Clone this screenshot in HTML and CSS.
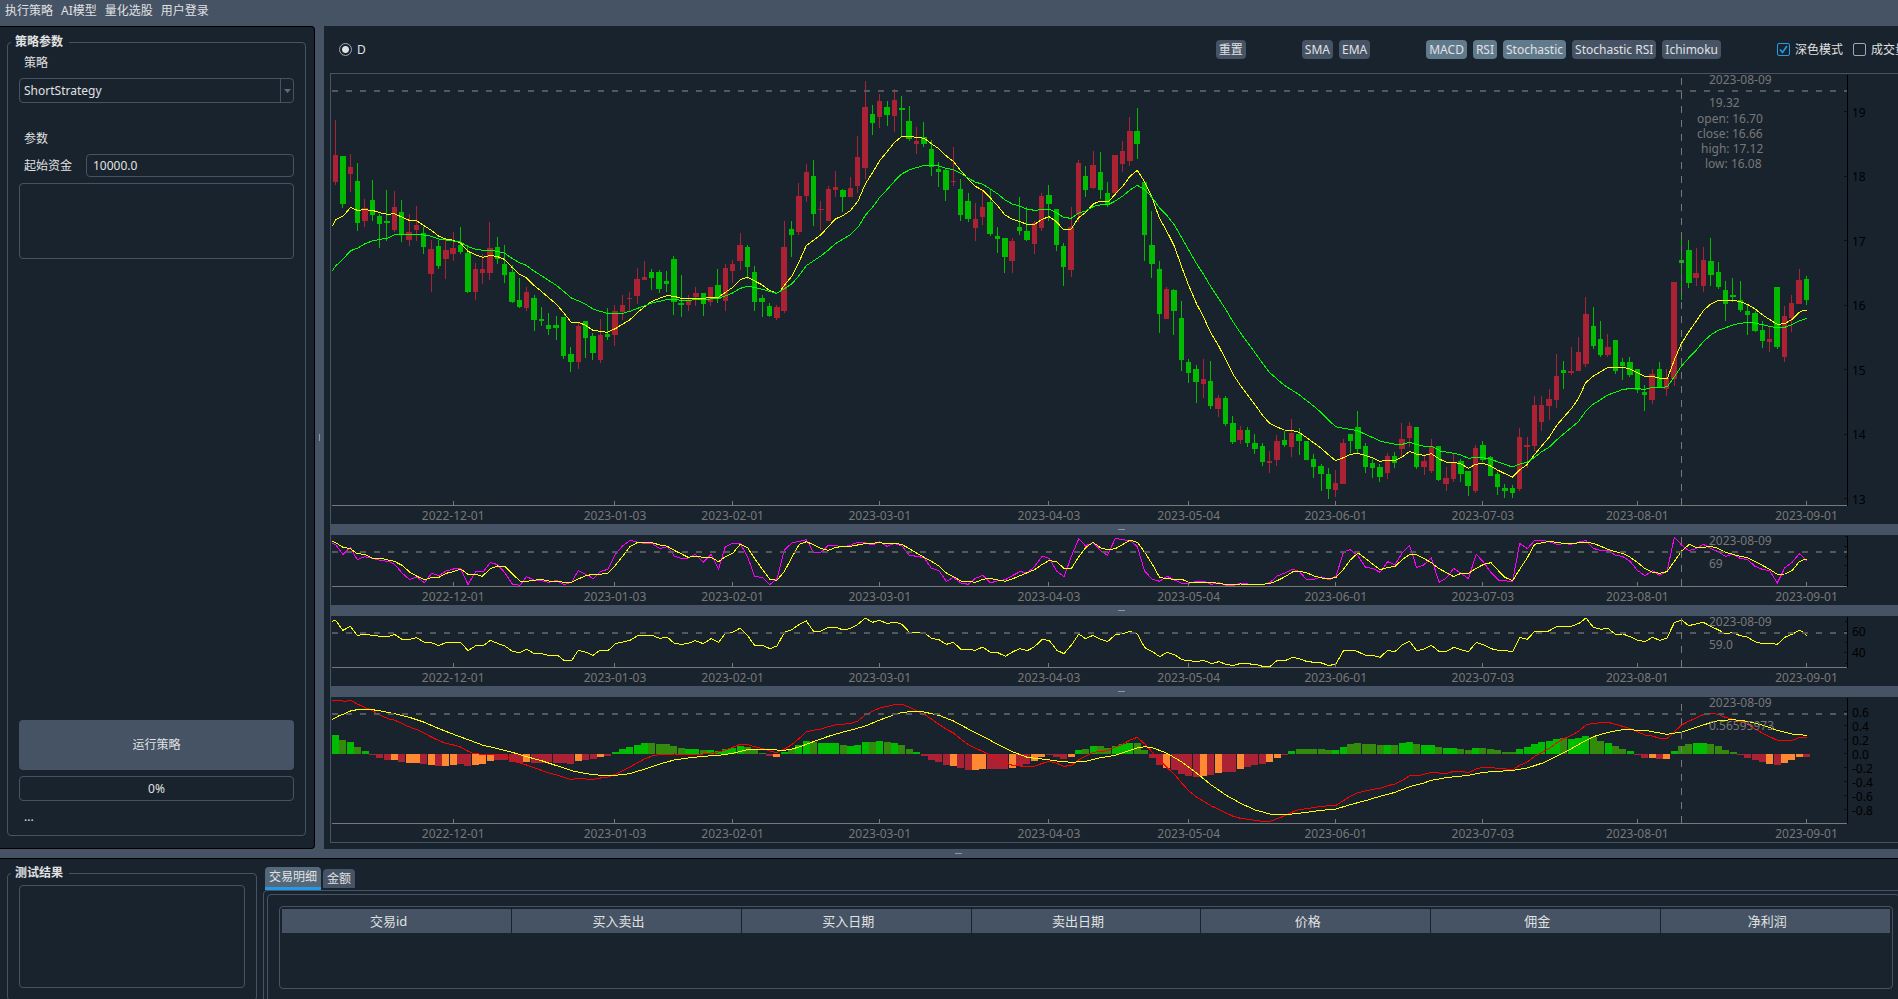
FILE: index.html
```html
<!DOCTYPE html>
<html lang="zh-CN">
<head>
<meta charset="utf-8">
<title>策略回测</title>
<link rel="stylesheet" href="styles.css">
</head>
<body>
<div class="app">
  <nav class="menubar">
    <button type="button" class="menu-item">执行策略</button>
    <button type="button" class="menu-item">AI模型</button>
    <button type="button" class="menu-item">量化选股</button>
    <button type="button" class="menu-item">用户登录</button>
  </nav>
  <main class="workspace">
    <aside class="side">
      <fieldset class="group params">
        <legend>策略参数</legend>
        <label class="caption" for="strategy">策略</label>
        <div class="select-wrap">
          <select id="strategy" class="field select"><option>ShortStrategy</option></select>
          <span class="select-arrow"><svg width="7" height="4" viewBox="0 0 7 4"><path d="M0 0h7L3.500 4z" fill="#5a6c80"/></svg></span>
        </div>
        <p class="caption section">参数</p>
        <div class="row">
          <label for="capital">起始资金</label>
          <input id="capital" class="field" type="text" value="10000.0">
        </div>
        <div class="box param-box"></div>
        <div class="spring"></div>
        <button type="button" class="run">运行策略</button>
        <div class="box progress" role="progressbar" aria-valuenow="0">0%</div>
        <p class="status">...</p>
      </fieldset>
    </aside>
    <div class="vsplit"><span class="vgrip"></span></div>
    <section class="main">
      <div class="toolbar">
        <label class="radio"><input type="radio" name="period" checked>D</label>
        <div class="spring"></div>
        <div class="tools"><button type="button" class="tool">重置</button></div>
        <div class="tools">
          <button type="button" class="tool">SMA</button>
          <button type="button" class="tool">EMA</button>
        </div>
        <div class="tools">
          <button type="button" class="tool on">MACD</button>
          <button type="button" class="tool on">RSI</button>
          <button type="button" class="tool on">Stochastic</button>
          <button type="button" class="tool">Stochastic RSI</button>
          <button type="button" class="tool">Ichimoku</button>
        </div>
        <div class="tools checks">
          <label class="check"><input type="checkbox" checked>深色模式</label>
          <label class="check"><input type="checkbox">成交量</label>
        </div>
      </div>
      <div class="charts">
        <div class="plot price"><svg id="price"></svg></div>
        <div class="hsplit"><span class="grip"></span></div>
        <div class="plot small"><svg id="stoch"></svg></div>
        <div class="hsplit"><span class="grip"></span></div>
        <div class="plot small"><svg id="rsi"></svg></div>
        <div class="hsplit"><span class="grip"></span></div>
        <div class="plot macd"><svg id="macd"></svg></div>
      </div>
    </section>
  </main>
  <div class="divider"><span class="grip"></span></div>
  <section class="bottom">
    <fieldset class="group results">
      <legend>测试结果</legend>
      <div class="box result-box"></div>
    </fieldset>
    <div class="trades">
      <div class="tabs">
        <button type="button" class="tab active">交易明细</button>
        <button type="button" class="tab">金额</button>
      </div>
      <div class="pane">
        <div class="pane-inner">
          <div class="box table-box">
            <table class="table">
              <thead><tr><th>交易id</th><th>买入卖出</th><th>买入日期</th><th>卖出日期</th><th>价格</th><th>佣金</th><th>净利润</th></tr></thead>
            </table>
          </div>
        </div>
      </div>
    </div>
  </section>
</div>
<script src="charts.js"></script>
</body>
</html>
```
FILE: styles.css
```css
* { box-sizing: border-box; }
body {
  margin: 0;
  background: #19232d;
  color: #e0e1e3;
  font: 12px/16px "Noto Sans", "Noto Sans CJK SC", sans-serif;
}
button, input, select { font: inherit; color: inherit; margin: 0; }
button { border: 0; cursor: pointer; }
p { margin: 0; }
.app { height: 100vh; overflow: hidden; display: flex; flex-direction: column; background: #455364; }
.menubar { flex: 0 0 26px; display: flex; gap: 8px; padding: 2px 5px 6px; }
.menu-item { background: none; padding: 0; line-height: 18px; }
.workspace { flex: 1; min-height: 0; display: flex; }
.side {
  flex: 0 0 315px;
  display: flex;
  padding: 7px 8px 12px 7px;
  background: #19232d;
  border: 1px solid #000;
  border-left: 0;
  border-radius: 0 4px 4px 0;
}
.group { margin: 0; min-width: 0; border: 1px solid #455364; border-radius: 4px; }
.group legend { font-weight: bold; line-height: 16px; padding: 0 6px 0 4px; margin-left: -8px; }
.params { flex: 1; display: flex; flex-direction: column; padding: 5px 11px 10px; }
.caption { padding-left: 5px; margin-bottom: 7px; }
.select-wrap { position: relative; display: flex; }
.field { border: 1px solid #455364; border-radius: 4px; background: #19232d; outline: 0; }
.select { appearance: none; width: 100%; height: 25px; padding: 0 4px; }
.select-arrow {
  position: absolute; top: 0; right: 0; bottom: 0; width: 14px;
  display: flex; align-items: center; justify-content: center;
  border-left: 1px solid #455364; pointer-events: none;
}
.section { margin-top: 28px; margin-bottom: 7px; }
.row { display: flex; align-items: center; justify-content: space-between; padding-left: 5px; }
.row .field { width: 208px; height: 23px; padding: 0 6px; }
.box { border: 1px solid #455364; border-radius: 4px; }
.param-box { height: 76px; margin-top: 6px; }
.spring { flex: 1; }
.run { height: 50px; background: #455364; border-radius: 4px; }
.progress { height: 25px; margin-top: 6px; text-align: center; line-height: 23px; }
.status { padding: 8px 5px 0; }
.vsplit { flex: 0 0 9px; display: flex; align-items: center; justify-content: center; }
.vgrip { width: 1px; height: 7px; background: #8b98a6; }
.grip { width: 7px; height: 1px; background: #8b98a6; }
.main { flex: 1; min-width: 0; overflow: hidden; display: flex; flex-direction: column; background: #19232d; padding: 0 0 6px 6px; }
.toolbar { flex: 0 0 47px; display: flex; align-items: center; padding-left: 9px; margin-right: -9px; white-space: nowrap; }
.tools { display: flex; gap: 6px; margin-right: 56px; }
.checks { margin-right: 0; gap: 10px; }
.tool { height: 19px; padding: 0 3px; line-height: 19px; background: #455364; border-radius: 4px; }
.tool.on { background: #60798b; }
.radio, .check { display: flex; align-items: center; gap: 5px; }
.radio input, .check input { appearance: none; flex: none; width: 13px; height: 13px; border: 1px solid #9da9b5; background: #19232d; }
.radio input { border-radius: 50%; }
.radio input:checked { background: radial-gradient(circle, #e0e1e3 3px, #19232d 4px); }
.check input { border-radius: 2px; }
.check input:checked {
  border-color: #259ae9;
  background: url("data:image/svg+xml,%3Csvg xmlns='http://www.w3.org/2000/svg' viewBox='0 0 11 11'%3E%3Cpath d='M2 5.5l2.500 3L9 2' fill='none' stroke='%23259ae9' stroke-width='1.6'/%3E%3C/svg%3E") center / 11px 11px no-repeat #19232d;
}
.charts { flex: 1; min-height: 0; display: flex; flex-direction: column; border: 1px solid #455364; border-right: 0; }
.plot { flex: 0 0 auto; min-height: 0; }
.plot svg { display: block; width: 100%; height: 100%; overflow: visible; }
.plot.price { flex: 1 1 0; }
.plot.small { height: 70px; }
.plot.macd { height: 145px; }
.plot text { font-size: 12px; fill: #787878; }
.plot text.scale { fill: #000; }
.hsplit { flex: 0 0 11px; display: flex; align-items: center; justify-content: center; padding-left: 14px; background: #455364; }
.divider { flex: 0 0 9px; display: flex; align-items: center; justify-content: center; padding-left: 18px; }
.bottom { flex: 0 0 141px; min-height: 0; overflow: hidden; display: flex; align-items: flex-start; background: #19232d; border-top: 1px solid #000; }
.results { flex: 0 0 250px; height: 136px; margin: 6px 5px 0 7px; padding: 4px 11px 11px; }
.result-box { height: 103px; }
.trades { flex: 1; min-width: 0; padding: 8px 0 0 1px; margin-right: -6px; }
.tabs { display: flex; align-items: flex-end; gap: 2px; height: 23px; padding-left: 2px; }
.tab { height: 19px; padding: 0 4px; line-height: 19px; margin-bottom: 2px; background: #455364; border-radius: 4px 4px 0 0; }
.tab.active { height: 23px; margin-bottom: 0; line-height: 20px; background: #54687a; border-bottom: 3px solid #259ae9; }
.pane { border: 1px solid #455364; border-radius: 4px 4px 0 0; padding: 3px; height: 120px; }
.pane-inner { border: 1px solid #455364; border-radius: 4px 4px 0 0; height: 120px; padding: 11px 6px 11px 11px; }
.table-box { height: 83px; padding: 2px; }
.table { width: 100%; border-collapse: collapse; table-layout: fixed; }
.table th { height: 24px; padding: 0 16px 0 0; font-size: 13px; font-weight: normal; background: #455364; border-right: 1px solid #19232d; }
.table th:last-child { border-right: 0; }
```
FILE: charts.js
```js
"use strict";

// Chart coordinates are stored in thirds of a unit; x runs over 1567 units.
const LEFT = 331, WIDTH = 1567, FIRST = 335.5, STEP = 7.355, AXIS = 1847.5;
const NS = "http://www.w3.org/2000/svg";
const DATES = [[16, "2022-12-01"], [38, "2023-01-03"], [54, "2023-02-01"], [74, "2023-03-01"], [97, "2023-04-03"], [116, "2023-05-04"], [136, "2023-06-01"], [156, "2023-07-03"], [177, "2023-08-01"], [200, "2023-09-01"]];
const CURSOR = 183;

// Blocks of candles: vertical origin, then colour, high, body top, body bottom, low.
const CANDLES = [
[60, `r 180 285 366 375,g 288 288 432 444,r 282 321 342 396,g 309 363 489 513,r 417 444 483 501,g 360 420 465 483,g 462 468 492 564,g 390 483 489 543,r 393 441 510 516,g 420 456 525 546,r 462 516 540 558,r 438 495 510 543,g 501 519 561 582,r 540 567 642 696,g 540 558 618 627,r 537 570 597 657,r 516 564 582 603,g 501 555 576 582,g 555 579 696 699,r 609 627 696 720,r 582 627 639 672,r 486 564 639 660,g 531 561 597 612,g 555 612 645 669,g 615 636 726 729,g 654 720 741 744,r 681 696 744 753,g 705 714 780 813,g 741 777 783 798,g 759 795 807 825,g 768 795 804 840,g 771 771 888 897,g 861 882 906 936,r 786 798 906 927,g 783 783 834 894,g 819 828 879 900,r 777 825 900 909,g 744 822 831 840,r 735 753 825 858,r 705 735 756 780,r 696 714 717 756,r 624 657 708 732,r 603 651 660 660,g 627 636 654 690,g 630 636 687 699,g 633 663 672 696,g 588 597 726 765,g 645 729 735 771,r 705 723 735 753,r 681 699 711 738,g 699 699 732 768,r 681 681 726 738`],
[70, `g 597 645 687 699,r 582 594 693 723,r 570 582 603 639,r 489 525 573 600,g 525 531 591 627,g 588 606 696 723,g 675 684 696 741,g 699 708 738 741,r 705 711 744 750,r 453 531 723 729,g 453 477 495 561,r 339 378 486 495,r 282 306 378 396,g 270 318 432 468,r 393 417 420 480,r 348 357 453 453,r 303 351 360 381,g 357 360 381 426,r 321 354 381 381,r 198 261 348 369,r 33 111 294 327,g 105 132 159 195,r 72 93 141 174,g 93 111 135 168,r 57 90 138 186,g 78 114 120 198,g 108 153 207 213,r 171 213 222 252,g 156 201 222 231,g 210 237 291 318,g 276 297 306 351,g 297 300 360 393,r 231 333 336 348,g 327 357 435 453,g 369 393 447 456,r 399 447 474 513,r 363 411 441 465,g 357 396 492 498,g 471 498 507 549,g 504 504 561 609,r 504 513 573 609,g 381 471 483 495,g 411 483 510 513,r 453 459 522 552,r 369 378 474 483,g 345 375 402 453,g 417 417 525 543,g 519 528 591 648,r 411 471 600 621,r 270 279 435 456,g 288 318 360 381,r 243 285 354 357`],
[90, `g 186 246 300 327,g 276 309 345 351,r 195 195 309 309,r 153 183 222 246,r 81 123 213 228,g 54 123 162 207,g 276 276 435 513,g 363 465 522 564,g 513 537 672 729,r 591 597 687 687,g 597 600 663 735,g 633 684 810 843,g 807 816 849 879,g 825 837 876 939,r 807 867 882 924,g 813 873 948 957,r 915 924 957 981,g 918 924 1002 1008,g 978 999 1056 1062,r 1008 1020 1050 1062,g 1011 1020 1059 1071,g 1032 1059 1077 1092,g 1059 1068 1116 1128,r 1083 1113 1119 1149,r 1035 1053 1110 1128,g 1023 1050 1065 1071,r 987 1029 1071 1101,g 1014 1032 1053 1095,g 1053 1053 1110 1110,g 1092 1107 1131 1164,g 1122 1128 1152 1203,g 1134 1152 1197 1227,r 1140 1179 1200 1221,r 1047 1059 1182 1182,g 1032 1032 1053 1089,g 963 1011 1077 1089,g 1059 1068 1131 1149,g 1107 1119 1134 1164,g 1122 1131 1161 1176,r 1089 1098 1149 1167,g 1086 1098 1119 1134,r 999 1047 1077 1101,r 996 1008 1044 1071,g 1011 1011 1131 1137,r 1092 1113 1131 1155,r 1047 1068 1143 1149,g 1068 1068 1170 1173,r 1131 1164 1182 1203,r 1092 1116 1167 1176,g 1107 1113 1152 1176,g 1143 1143 1188 1218,r 1065 1074 1203 1209`],
[60, `g 1143 1155 1200 1206,g 1188 1191 1248 1248,g 1236 1242 1281 1305,g 1272 1284 1293 1314,g 1275 1284 1299 1314,r 1104 1131 1287 1293,r 1131 1155 1161 1224,r 1008 1035 1158 1173,r 1008 1035 1086 1113,r 987 1017 1038 1080,r 882 948 1020 1044,g 903 930 939 987,r 861 933 939 945,r 831 876 933 933,r 711 762 912 921,g 741 798 858 867,g 783 837 885 891,r 822 861 885 891,g 840 840 933 942,g 894 906 918 960,g 891 906 945 951,g 927 927 990 999,g 975 996 1005 1053,r 927 942 1020 1032,g 906 927 981 984,r 927 954 987 1008,r 666 666 957 978,g 516 600 609 720,g 540 570 669 684,r 564 639 654 678,r 561 600 678 696,g 534 603 645 678,g 606 636 681 687,g 663 690 732 783,g 654 705 711 726,g 663 720 750 756,g 732 753 765 825,g 753 759 813 816,g 783 810 843 864,r 801 837 846 876,g 681 681 861 867,r 738 768 891 906,r 705 729 774 816,r 627 660 732 732,g 648 657 720 735`]
];

// Line blocks: x origin, y origin, x resolution, points.
const EMA_FAST = [
[320, 60, 3, "37,499 46,480 70,468 92,442 112,451 135,449 160,452 180,458 201,463 223,461 245,471 268,481 289,482 312,497 334,511 357,529 378,537 400,541 421,548 444,574 466,584 488,592 511,586 533,590 553,598 576,622 598,643 619,653 643,677 664,694 687,714 709,732 730,757 754,787 776,787 797,796 819,811 841,814 862,817 886,806 907,793 930,779 953,757 975,739 996,724 1018,715 1042,707 1062,709 1084,715 1128,715"],
[700, 70, 3, "10,685 31,682 55,682 76,667 98,652 121,629 142,622 164,633 187,645 208,661 230,670 240,664 253,646 275,619 297,576 319,527 340,511 364,493 385,470 406,447 430,436 451,422 474,393 496,342 517,309 540,271 562,244 583,218 605,199 628,199 649,202 673,205 694,221 715,235 739,258 760,274 782,302 805,328 826,349 848,361 871,384 892,406 914,434 937,448 958,454 980,463 1003,464 1024,449 1047,440 1069,455 1090,478 1113,478 1135,444"],
[1080, 90, 3, "0,380 17,367 41,341 61,334 87,334 106,312 127,290 150,259 172,241 193,274 216,322 238,384 261,425 283,468 304,528 326,586 349,640 370,680 393,730 415,766 437,808 460,854 481,886 502,914 525,944 547,975 568,999 591,1011 613,1020 635,1021 657,1027 680,1043 702,1059 723,1074 745,1094 767,1112 790,1103 812,1093 833,1090 856,1096 877,1103 900,1114 922,1111 947,1111 967,1101 989,1084 1009,1092 1033,1096 1054,1091 1076,1106"],
[1440, 60, 3, "0,1198 20,1207 41,1207 63,1212 86,1225 106,1213 128,1210 150,1217 172,1230 195,1241 217,1252 240,1229 261,1214 284,1183 305,1158 328,1131 350,1096 371,1072 394,1046 415,1016 437,968 460,948 482,935 503,923 526,923 549,922 571,927 592,938 613,949 636,949 658,954 682,956 703,900 724,851 746,816 769,783 791,751 812,732 835,721 857,722 879,721 901,725 924,734 944,746 967,764 988,778 1012,793 1034,791 1055,779 1079,756 1088,752 1101,750"]
];
const EMA_SLOW = [
[320, 60, 3, "37,632 46,619 70,596 92,572 112,565 135,551 160,542 180,538 201,535 223,524 245,523 268,523 289,522 312,525 334,529 357,537 378,540 400,543 421,546 444,560 466,567 488,571 511,571 533,574 553,579 576,595 598,608 619,616 643,634 664,647 687,662 709,676 730,693 754,714 776,723 797,733 819,747 841,754 862,760 886,760 907,760 930,754 953,745 975,737 996,729 1018,724 1042,718 1062,718 1084,721 1106,721 1128,719"],
[700, 70, 3, "10,690 31,687 55,685 76,678 98,669 121,655 142,649 164,652 187,658 208,664 230,670 253,656 275,642 297,617 319,587 340,573 364,557 385,540 406,521 430,507 451,494 474,472 496,436 517,412 540,381 562,358 583,334 605,312 628,300 649,293 673,286 694,286 715,287 739,295 760,299 782,310 805,325 826,336 848,343 871,357 892,371 914,389 937,402 958,408 980,417 1003,421 1024,419 1047,417 1069,428 1090,442 1113,445 1135,430"],
[1080, 90, 3, "0,368 17,363 41,349 61,345 87,343 106,333 127,319 150,300 172,286 193,298 216,322 238,353 261,377 283,405 304,441 326,480 349,520 370,552 393,591 415,624 437,658 460,697 481,728 502,757 525,788 547,819 568,847 591,867 613,886 635,900 657,914 680,932 702,949 723,967 745,990 767,1010 790,1015 812,1018 833,1022 856,1033 877,1042 900,1053 922,1058 947,1063 967,1063 989,1057 1009,1063 1033,1069 1054,1069 1076,1079"],
[1440, 60, 3, "0,1173 41,1180 63,1185 86,1195 106,1192 128,1193 150,1197 172,1205 195,1213 217,1221 240,1212 261,1207 284,1192 305,1175 328,1161 350,1140 371,1122 394,1103 415,1085 437,1054 460,1032 482,1019 503,1005 526,997 549,988 571,986 592,986 613,988 636,983 658,983 682,980 703,950 724,919 746,894 769,870 791,844 812,825 835,811 857,803 879,795 901,790 924,787 944,789 967,794 988,799 1012,804 1034,802 1055,794 1079,782 1101,775"]
];
const STOCH_K = [
[320, 500, 2.9585, "36,130 46,134 68,163 90,142 110,179 132,170 155,175 180,181 205,185 220,192 243,219 265,239 287,231 309,248 330,220 352,227 373,213 395,207 416,206 438,254 461,214 484,214 504,187 525,194 547,218 569,252 591,256 611,230 633,240 655,242 677,247 700,241 722,254 745,246 764,212 787,223 808,236 830,214 852,208 874,162 896,137 917,121 940,127 961,130 983,131 1005,146 1028,140 1048,168 1070,176 1089,174 1110,163 1134,187 1157,163 1179,208 1199,140 1221,130 1243,130 1265,170 1286,230 1309,232 1331,254 1352,236 1374,150 1396,129 1418,124 1439,119 1460,157 1482,157 1504,136 1527,137 1548,141"],
[850, 500, 2.9585, "0,136 22,127 45,128 66,135 88,125 110,139 131,130 154,138 176,166 198,169 219,173 241,205 263,212 285,244 306,232 328,249 350,253 371,235 393,226 415,249 437,242 460,239 482,226 503,215 525,218 546,200 569,168 590,176 612,214 633,230 656,166 677,116 697,138 719,127 742,152 762,166 785,115 806,119 829,122 850,140 872,214 895,238 916,244 938,229 960,240 982,250 1003,250 1026,244 1047,244 1069,253 1091,248 1113,256 1134,256 1156,250 1178,252 1199,252 1221,254 1243,247 1264,228 1287,219 1309,208 1329,214 1350,238 1373,238 1395,231 1418,239 1438,228 1460,156 1480,149 1503,168 1525,202 1547,205"],
[1380, 500, 3, "0,217 23,185 45,194 67,158 89,137 110,203 131,195 154,173 177,247 198,235 221,205 243,220 265,236 289,163 311,187 333,218 355,240 380,243 398,243 419,130 442,146 464,121 488,121 510,126 532,133 552,131 574,133 597,126 618,122 640,145 663,152 684,150 706,166 728,169 751,185 772,211 795,227 817,212 839,226 861,215 883,112 905,135 926,152 948,146 970,133 992,145 1014,155 1036,169 1059,163 1080,175 1102,179 1125,199 1147,208 1169,212 1192,249 1214,204 1236,187 1258,161 1280,182"]
];
const STOCH_D = [
[320, 500, 2.9585, "36,124 46,128 68,142 90,146 110,161 132,163 155,175 180,175 205,181 220,184 243,196 265,216 287,229 309,239 330,233 352,232 373,220 395,215 416,207 438,223 461,223 480,229 504,206 525,198 547,199 569,221 591,243 611,244 633,241 655,238 677,243 700,244 722,247 745,246 764,237 787,227 808,223 830,223 852,219 874,196 896,168 917,140 940,127 961,128 983,128 1005,135 1028,139 1048,151 1070,162 1089,172 1110,168 1134,172 1157,172 1179,185 1199,170 1221,160 1243,133 1265,143 1286,176 1309,208 1331,238 1352,241 1374,214 1396,172 1418,133 1439,125 1460,134 1482,145 1504,151 1527,142 1548,139"],
[850, 500, 2.9585, "0,139 45,131 88,128 110,131 135,130 154,134 176,146 198,160 219,172 241,184 263,198 285,219 306,230 328,243 350,244 371,247 393,238 415,235 437,240 460,244 482,236 503,227 525,218 546,209 569,193 590,181 612,186 633,205 656,204 677,170 697,143 719,127 742,144 762,149 785,146 806,134 829,120 850,127 872,157 895,194 916,232 938,236 960,238 982,238 1003,247 1047,247 1069,247 1091,250 1113,254 1156,252 1199,254 1221,253 1243,250 1264,242 1287,230 1309,216 1329,214 1350,218 1373,228 1395,234 1418,236 1438,232 1460,208 1480,180 1503,159 1525,175 1547,193"],
[1380, 500, 3, "0,209 23,203 45,199 67,179 89,163 110,164 131,175 154,188 177,206 198,217 221,230 243,220 265,220 289,205 311,193 333,188 355,212 375,232 398,242 419,208 442,173 464,133 488,128 510,124 532,128 552,130 574,132 597,128 618,127 640,130 663,139 684,148 706,155 728,160 751,172 772,187 795,206 817,216 839,220 861,215 883,184 905,153 928,133 948,142 970,142 992,139 1014,145 1036,157 1059,163 1080,169 1102,173 1125,184 1147,196 1169,208 1192,223 1214,222 1236,212 1258,185 1270,179 1280,179"]
];
const RSI = [
[320, 500, 2.9585, "36,364 46,361 68,391 90,379 110,406 132,403 155,406 180,409 205,409 220,403 243,418 265,418 285,413 309,427 330,428 352,437 373,427 416,427 438,452 461,437 484,436 504,421 525,430 547,438 569,454 591,458 611,448 633,460 655,461 677,466 704,467 722,481 745,481 764,451 787,457 808,466 826,452 852,452 874,431 896,426 917,421 940,407 961,406 983,406 1005,415 1028,412 1048,430 1070,433 1089,430 1110,422 1134,431 1157,416 1179,427 1199,401 1221,397 1243,384 1265,407 1286,436 1309,436 1331,446 1352,438 1374,397 1396,389 1418,373 1439,363 1460,394 1482,393 1504,382 1527,382 1548,390"],
[850, 500, 2.9585, "0,386 22,374 45,354 66,367 88,361 110,371 131,366 154,373 176,397 219,398 241,415 263,419 285,433 306,427 328,448 350,448 371,451 393,441 415,457 437,458 460,469 482,455 503,446 525,452 546,440 569,418 590,422 612,451 633,461 656,434 677,402 697,416 719,406 742,418 762,425 785,404 806,401 829,394 850,402 872,443 895,455 916,470 938,457 960,464 982,479 1003,482 1026,485 1047,481 1069,491 1091,485 1113,493 1134,497 1156,490 1199,493 1221,499 1243,499 1264,481 1287,482 1309,472 1329,476 1350,484 1373,487 1395,489 1418,497 1438,491 1460,452 1494,451 1525,466 1547,466"],
[1380, 500, 3, "0,472 23,451 45,455 67,434 89,424 110,452 131,448 154,436 177,454 200,454 221,442 243,449 265,455 289,427 311,435 333,446 355,451 398,454 419,412 442,418 464,394 504,394 532,379 574,379 597,370 618,354 640,382 663,388 684,385 706,403 728,402 751,410 772,420 795,425 817,412 839,421 861,414 883,368 905,360 926,377 948,372 970,367 992,379 1014,389 1036,401 1059,398 1080,407 1102,411 1125,425 1147,431 1169,430 1192,433 1214,412 1236,403 1258,391 1270,397 1280,407"]
];
const MACD_LINE = [
[320, 500, 2.9585, "36,603 55,601 75,604 92,601 110,612 132,622 155,632 180,647 205,657 220,660 243,671 265,681 287,689 309,700 330,711 352,722 373,730 395,735 416,741 438,754 455,761 484,763 525,765 547,769 569,779 591,789 611,795 633,803 655,811 677,819 700,825 722,832 740,838 764,836 808,838 830,834 852,831 874,823 896,812 917,801 940,788 961,776 983,768 1005,763 1048,762 1089,763 1134,762 1179,756 1199,750 1221,742 1243,733 1265,734 1286,740 1309,746 1331,753 1352,758 1374,747 1396,734 1418,715 1439,695 1460,691 1482,687 1504,680 1527,674"],
[850, 500, 2.9585, "0,671 22,664 45,645 66,634 88,624 110,619 131,614 154,613 176,622 198,633 219,643 241,657 263,673 285,688 306,699 328,717 350,734 371,745 393,754 415,766 437,776 460,788 480,796 503,798 525,801 546,799 569,790 590,784 612,790 633,799 656,796 677,779 697,769 719,757 762,752 785,741 806,733 829,720 850,712 872,732 895,757 916,780 938,803 960,823 982,850 1003,873 1026,892 1047,904 1069,918 1091,928 1113,939 1134,949 1156,955 1199,961 1221,964 1243,964 1264,956 1287,947 1309,936 1329,929 1350,926 1395,919 1438,916 1460,902 1480,889 1503,878 1525,873 1547,868"],
[1380, 500, 3, "0,865 23,857 45,852 67,841 89,827 120,826 154,817 198,821 221,814 243,814 265,818 289,807 311,801 333,803 398,809 419,796 442,786 464,769 488,756 510,744 532,727 552,716 574,706 597,693 618,675 640,670 684,667 706,673 728,679 751,686 772,695 795,705 817,708 839,715 861,716 883,695 905,675 926,664 948,654 970,644 992,640 1014,643 1036,652 1059,658 1080,665 1102,672 1125,687 1147,699 1169,710 1192,721 1236,721 1258,713 1280,712"]
];
const MACD_SIGNAL = [
[320, 500, 2.9585, "36,658 55,648 75,640 90,633 110,629 155,629 180,633 220,641 265,652 309,667 352,686 395,703 438,719 480,735 525,746 569,757 611,770 655,782 700,797 745,812 787,821 830,826 874,826 917,821 961,807 1005,792 1048,780 1089,774 1134,769 1179,766 1221,760 1243,754 1265,749 1331,749 1374,751 1396,747 1418,741 1460,725 1504,709 1548,696"],
[850, 500, 2.9585, "0,691 45,678 88,660 131,644 154,637 198,634 219,636 263,646 306,663 350,687 393,709 437,733 480,755 525,772 569,777 612,783 656,787 697,784 742,773 785,766 829,751 850,744 872,740 895,743 938,760 982,786 1026,820 1069,855 1113,886 1156,910 1199,930 1243,942 1309,942 1350,937 1395,931 1438,927 1480,914 1525,902"],
[1380, 500, 3, "0,889 45,877 89,860 131,849 154,841 198,833 265,826 311,817 398,811 442,804 488,789 532,767 574,746 618,721 640,710 684,697 728,689 795,691 839,699 861,703 905,696 948,682 992,668 1014,662 1059,659 1102,664 1147,675 1192,691 1236,702 1280,706"]
];

const HISTOGRAM = "G705 D720 G726 D741 G753 R765 R774 R780 O780 R786 O789 O789 R792 O795 R798 O798 O795 R792 R798 O795 O792 O783 R780 R780 R786 R789 O786 R789 R789 R786 R789 R789 R792 O783 R780 R777 O771 R768 G756 G747 G741 G735 G729 D729 D732 D732 D738 D744 G747 G747 D750 G750 G753 G747 G744 G738 D741 D750 D759 R768 O771 G756 D747 G735 G723 D726 G729 G729 G729 D735 G738 G735 G726 D726 G723 D726 G729 D735 D747 G756 R768 R780 R786 R795 O798 R804 R810 O810 O807 R807 R807 R807 O804 R798 R792 O783 O771 R765 R771 R777 O771 G750 D747 G738 D738 D744 G738 G732 G729 D729 D750 R774 R795 O804 R810 R822 R828 R831 O828 R825 O819 R816 R816 O807 R801 R795 R792 O786 O774 R765 G753 D747 D747 D747 D747 D750 G750 G741 D732 D729 D732 D732 D735 G735 D735 G729 G726 D732 G735 G735 D741 G744 G744 D747 D750 G744 D744 D747 D750 D756 D756 G747 G741 G732 G726 G723 G717 D714 G717 G714 G708 D711 D723 G729 D738 D747 G753 R765 R774 O774 R777 O777 G753 D738 D732 G729 G729 D732 D738 D750 D756 R765 R774 R780 R786 O792 R795 O789 O780 O771 R771";
const FILL = { G: "#00bb00", D: "#338a0d", R: "#aa2233", O: "#ff8833" };

function plot(id, top, height, axisY, draw) {
  const svg = document.getElementById(id);
  svg.textContent = "";
  const sx = svg.parentNode.clientWidth / WIDTH;
  const sy = svg.parentNode.clientHeight / height;
  const X = v => (v - LEFT) * sx;
  const Y = v => (v - top) * sy;
  const add = (tag, attrs, text) => {
    const el = document.createElementNS(NS, tag);
    for (const k in attrs) el.setAttribute(k, attrs[k]);
    if (text !== undefined) el.textContent = text;
    svg.appendChild(el);
  };
  const path = (d, stroke, extra) => add("path", Object.assign({ d, stroke, fill: "none", "shape-rendering": "crispEdges" }, extra));
  const g = {
    X, Y, add, path,
    at: i => FIRST + i * STEP,
    series(blocks, stroke) {
      const pts = blocks.flatMap(([ox, oy, res, s]) => s.split(" ").map(p => {
        const [a, b] = p.split(",").map(Number);
        return X(ox + a / res) + " " + Y(oy + b / 3);
      }));
      path("M" + pts.join("L"), stroke);
    },
    label(x, y, text, cls) { add("text", { x: X(x), y: Y(y) + 5, class: cls || "" }, text); },
    cross(y, from) {
      path(`M${X(332)} ${Y(y)}H${X(AXIS)}`, "#55595c", { "stroke-width": 2, "stroke-dasharray": "6 8" });
      path(`M${X(g.at(CURSOR))} ${Y(from)}V${Y(axisY)}`, "#787878", { "stroke-dasharray": "7 7" });
    },
    ticks(from, count, gap, major) {
      for (let i = 0; i < count; i++) {
        const y = Y(from + i * gap);
        path(`M${X(AXIS) - (i % 2 === major ? 4 : 3)} ${y}H${X(AXIS)}`, "#0a0e12");
      }
    }
  };
  draw(g);
  path(`M${X(332)} ${Y(axisY)}H${X(AXIS)}`, "#787878");
  path(`M${X(AXIS)} ${Y(top + 1)}V${Y(axisY)}`, "#000");
  for (const [i, text] of DATES) {
    const x = X(g.at(i));
    path(`M${x} ${Y(axisY) - 5}V${Y(axisY)}`, "#787878");
    add("text", { x, y: Y(axisY) + 14, "text-anchor": "middle" }, text);
  }
}

function render() {
  plot("price", 74, 450, 505.5, g => {
    let i = 0;
    for (const [origin, rows] of CANDLES) {
      for (const row of rows.split(",")) {
        const [c, ...v] = row.split(" ");
        const [hi, t, b, lo] = v.map(n => origin + n / 3);
        const fill = c === "r" ? FILL.R : FILL.G;
        const x = g.at(i++);
        g.path(`M${g.X(x)} ${g.Y(hi)}V${g.Y(lo)}`, fill);
        g.add("rect", { x: g.X(x - 2.7), y: g.Y(t), width: g.X(x + 2.7) - g.X(x - 2.7), height: Math.max(1, g.Y(b) - g.Y(t)), fill, "shape-rendering": "crispEdges" });
      }
    }
    g.series(EMA_FAST, "#ffff00");
    g.series(EMA_SLOW, "#00ff00");
    g.cross(91, 78);
    for (let p = 19; p >= 13; p--) {
      const y = 111.5 + (19 - p) * 64.5;
      g.ticks(y, 1, 0, 0);
      g.label(1852, y, p, "scale");
    }
    g.label(1709, 79, "2023-08-09");
    g.label(1709, 102, "19.32");
    g.label(1697, 118, "open: 16.70");
    g.label(1697, 133, "close: 16.66");
    g.label(1701, 148, "high: 17.12");
    g.label(1705, 163, "low: 16.08");
  });
  plot("stoch", 535, 70, 586.5, g => {
    g.series(STOCH_K, "#ff00ff");
    g.series(STOCH_D, "#ffff00");
    g.cross(552, 537);
    g.ticks(536.5, 6, 9.8, 1);
    g.label(1709, 540, "2023-08-09");
    g.label(1709, 563, "69");
  });
  plot("rsi", 616, 70, 667.5, g => {
    g.series(RSI, "#ffff00");
    g.cross(633, 618);
    g.ticks(621, 5, 10.5, 1);
    g.label(1852, 631, "60", "scale");
    g.label(1852, 652, "40", "scale");
    g.label(1709, 621, "2023-08-09");
    g.label(1709, 644, "59.0");
  });
  plot("macd", 697, 145, 823.5, g => {
    HISTOGRAM.split(" ").forEach((s, i) => {
      const y = 500 + s.slice(1) / 3, base = 753.5, x = g.at(i);
      const from = Math.min(y, base), to = Math.max(y, base);
      g.add("rect", { x: g.X(x - 3.4), y: g.Y(from), width: g.X(7) - g.X(0), height: g.Y(to) - g.Y(from), fill: FILL[s[0]], "shape-rendering": "crispEdges" });
    });
    g.series(MACD_LINE, "#ff0000");
    g.series(MACD_SIGNAL, "#ffff00");
    g.cross(714, 704);
    for (let i = 0; i < 8; i++) {
      const y = 711.5 + i * 14;
      g.ticks(y, 1, 0, 0);
      g.label(1852, y, (0.6 - i * 0.2).toFixed(1).replace("-0.0", "0.0"), "scale");
    }
    g.label(1709, 702, "2023-08-09");
    g.label(1709, 725, "0.56595973");
  });
}

render();
window.addEventListener("resize", render);
```
